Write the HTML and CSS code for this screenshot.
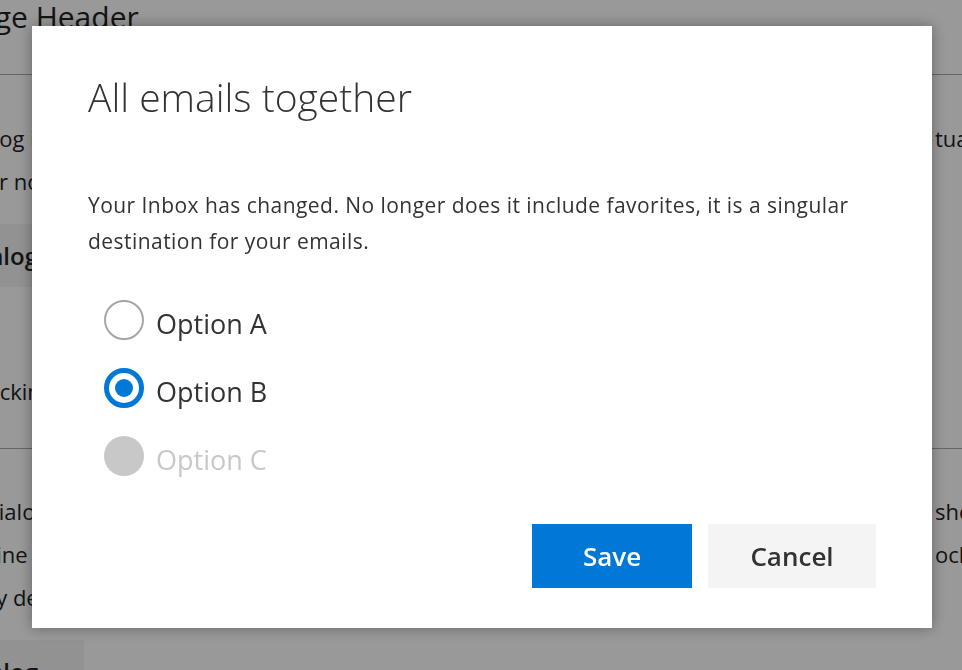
FILE: index.html
```html
<!DOCTYPE html>
<html lang="en">
<head>
<meta charset="utf-8">
<title>All emails together</title>
<link rel="stylesheet" href="styles.css">
</head>
<body>
<div class="page">
  <h1 class="page-title">Page Header</h1>
  <hr class="rule">
  <div class="para para-first">
    <div class="line"><span class="l">Dialog is a temporary overlay</span><span class="r">tual</span></div>
    <div class="line"><span class="l">Your notifications</span></div>
  </div>
  <button class="page-btn" type="button">Open Dialog</button>
  <div class="para para-single">
    <div class="line"><span class="l">Checking dialogs</span></div>
  </div>
  <hr class="rule rule-second">
  <div class="para para-third">
    <div class="line"><span class="l">In dialogs</span><span class="r">should</span></div>
    <div class="line"><span class="l">Online</span><span class="r">ocking</span></div>
    <div class="line"><span class="l">Only designed</span></div>
  </div>
  <button class="page-btn" type="button">Open Dialog</button>
</div>

<div class="overlay"></div>

<div class="dialog" role="dialog" aria-labelledby="dlg-title">
  <h2 class="dialog-title" id="dlg-title">All emails together</h2>
  <p class="dialog-text">Your Inbox has changed. No longer does it include favorites, it is a singular destination for your emails.</p>
  <div class="choices">
    <div class="choice"><span class="radio"></span><span class="choice-label">Option A</span></div>
    <div class="choice is-checked"><span class="radio"></span><span class="choice-label">Option B</span></div>
    <div class="choice is-disabled"><span class="radio"></span><span class="choice-label">Option C</span></div>
  </div>
  <div class="dialog-footer">
    <button class="btn btn-primary" type="button">Save</button>
    <button class="btn btn-default" type="button">Cancel</button>
  </div>
</div>
</body>
</html>
```

FILE: styles.css
```css
html, body {
  margin: 0;
  padding: 0;
  overflow: hidden;
  background: #ffffff;
}

body {
  width: 962px;
  height: 670px;
  font-family: "Open Sans", "Noto Sans", sans-serif;
  color: #222222;
}

/* ---------- page behind the dialog ---------- */
.page {
  margin-left: -40px;
  width: 1090px;
}

.page-title {
  margin: -3px 0 0 0;
  font-size: 30px;
  line-height: 40px;
  font-weight: 400;
  color: #222222;
}

.rule {
  margin: 37px 0 0;
  border: 0;
  height: 1px;
  background: #aaaaaa;
}

.rule-second {
  margin-top: 35px;
}

.para {
  font-size: 22px;
  line-height: 43px;
  color: #222222;
}

.para-first { margin-top: 42px; }
.para-single { margin-top: 83px; }
.para-third { margin-top: 41px; }

.line {
  display: grid;
  grid-template-columns: 975px auto;
  white-space: nowrap;
}

.page-btn {
  display: block;
  margin: 21px 0 0 -84px;
  height: 63px;
  padding: 0 46px 0 20px;
  border: 0;
  background: #f4f4f4;
  color: #222222;
  font-family: "Open Sans", "Noto Sans", sans-serif;
  font-size: 24px;
  font-weight: 600;
}

.overlay {
  position: fixed;
  inset: 0;
  background: rgba(0, 0, 0, 0.4);
}

/* ---------- dialog ---------- */
.dialog {
  position: fixed;
  left: 32px;
  top: 26px;
  width: 900px;
  height: 602px;
  box-sizing: border-box;
  padding: 47px 56px 40px;
  background: #ffffff;
  box-shadow: 0 0 14px rgba(0, 0, 0, 0.35);
  display: flex;
  flex-direction: column;
}

.dialog-title {
  margin: 0;
  font-size: 39px;
  line-height: 48px;
  font-weight: 300;
  color: #333333;
}

.dialog-text {
  margin: 66px 0 0;
  font-size: 21px;
  letter-spacing: 0.45px;
  line-height: 36px;
  color: #333333;
}

.choices {
  margin-top: 27px;
  display: flex;
  flex-direction: column;
}

.choice {
  height: 68px;
  display: flex;
  align-items: center;
  gap: 12px;
  padding-left: 16px;
}

.radio {
  width: 40px;
  height: 40px;
  box-sizing: border-box;
  border-radius: 50%;
  border: 2px solid #a6a6a6;
  background: #ffffff;
  display: flex;
  align-items: center;
  justify-content: center;
  flex: none;
}

.is-checked .radio {
  border: 5px solid #0078d7;
}

.is-checked .radio::after {
  content: "";
  width: 18px;
  height: 18px;
  border-radius: 50%;
  background: #0078d7;
}

.is-disabled .radio {
  border: 0;
  background: #c8c8c8;
}

.choice-label {
  font-size: 27px;
  line-height: 36px;
  padding-top: 8px;
  color: #333333;
}

.is-disabled .choice-label {
  color: #c8c8c8;
}

.dialog-footer {
  margin-top: auto;
  display: flex;
  justify-content: flex-end;
  gap: 16px;
}

.btn {
  height: 64px;
  border: 0;
  font-family: "Open Sans", "Noto Sans", sans-serif;
  font-size: 26px;
  font-weight: 600;
  padding: 0;
}

.btn-primary {
  width: 160px;
  background: #0078d7;
  color: #ffffff;
}

.btn-default {
  width: 168px;
  background: #f4f4f4;
  color: #333333;
}
```
